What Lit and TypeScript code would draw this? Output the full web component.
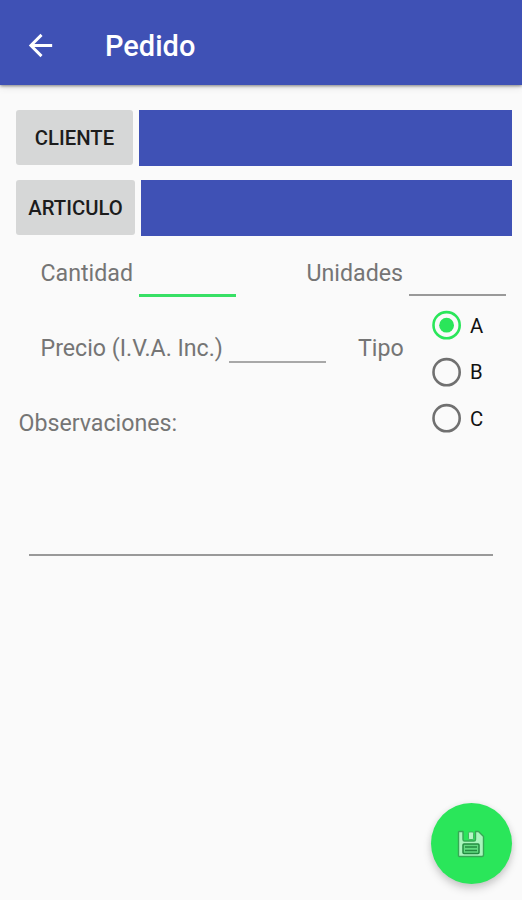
import { LitElement, html, css, svg } from "lit";
import { customElement, state } from "lit/decorators.js";

@customElement("app-root")
export class AppRoot extends LitElement {
  @state() private tipo = "A";

  static styles = css`
    :host {
      display: block;
      position: relative;
      height: 900px;
      overflow: hidden;
      background: #fafafa;
      color: #757575;
      font-family: Roboto, "Noto Sans", sans-serif;
      font-size: 23.2px;
      line-height: 28px;
    }
    * { box-sizing: border-box; }
    svg { display: block; }
    header {
      height: 85px;
      padding: 6px 0 0 23px;
      display: flex;
      align-items: center;
      background: #3f51b5;
      box-shadow: 0 1px 3px rgba(0, 0, 0, 0.45), 0 2px 8px rgba(0, 0, 0, 0.1);
    }
    h1 {
      margin: 1px 0 0 47px;
      color: #fff;
      font-size: 29px;
      line-height: 36px;
      font-weight: 500;
    }
    .pickers {
      padding: 25px 10px 0 16px;
      display: flex;
      flex-direction: column;
      gap: 14px;
    }
    .picker { display: flex; gap: 6px; height: 56px; }
    .btn {
      height: 55px;
      width: 117px;
      padding: 0;
      border: 0;
      border-radius: 3px;
      background: #d6d7d7;
      color: #1c1c1c;
      font: 500 20.3px/24px Roboto, sans-serif;
      text-align: center;
    }
    .btn.wide { width: 119px; }
    .value { flex: 1; background: #3f51b5; }
    .form { display: flex; padding-top: 23px; height: 173px; }
    .left { width: 326px; padding-left: 40px; }
    .right { width: 196px; }
    .row { display: flex; gap: 6px; height: 39px; }
    .unidades { margin-left: -20px; }
    .precio { margin-top: 36px; }
    .field { width: 97px; height: 37px; border-bottom: 2px solid #999; }
    .label { white-space: nowrap; }
    .row .label, .notes .label { text-indent: 0.5px; }
    .field.focus { height: 38px; border-bottom: 3px solid #37e065; }
    .precio .field { height: 29px; border-color: #a8a8a8; }
    .cantidad .label { width: 93px; }
    .precio .label { width: 183px; }
    .unidades .label { width: 97px; }
    .tipo { display: flex; padding-left: 32px; }
    .tipo > .label { width: 73.5px; margin-top: 36px; }
    .radios { display: flex; flex-direction: column; gap: 16.5px; margin-top: 12px; }
    .radio {
      display: flex;
      align-items: center;
      gap: 8.5px;
      height: 30px;
      color: #111;
      font-size: 20.3px;
    }
    .radio span { padding-top: 1px; }
    .notes { padding: 0 29px; }
    .notes .label { margin-left: -11px; }
    .area { height: 119px; border-bottom: 2px solid #999; }
    .fab {
      position: absolute;
      left: 431px;
      top: 803px;
      width: 81px;
      height: 81px;
      padding: 0 1px 0 0;
      border: 0;
      border-radius: 50%;
      background: #2ae65a;
      display: grid;
      place-items: center;
      box-shadow: 0 5px 8px rgba(0, 0, 0, 0.17), 0 1px 6px rgba(0, 0, 0, 0.08);
    }
  `;

  private radio(name: string) {
    const on = this.tipo === name;
    return html`<div class="radio" role="radio" aria-checked=${on} @click=${() => (this.tipo = name)}>
      <svg width="30" height="30" viewBox="0 0 30 30">
        <circle cx="14.6" cy="15.2" r="13.1" fill="none" stroke=${on ? "#2ae65a" : "#707070"} stroke-width="2.6" />
        ${on ? svg`<circle cx="14.6" cy="15.2" r="7.4" fill="#2ae65a" />` : ""}
      </svg>
      <span>${name}</span>
    </div>`;
  }

  render() {
    return html`
      <header>
        <svg width="35" height="35" viewBox="0 0 24 24" fill="#fff">
          <path d="M20 11H7.83l5.59-5.59L12 4l-8 8 8 8 1.41-1.41L7.83 13H20v-2z" />
        </svg>
        <h1>Pedido</h1>
      </header>
      <div class="pickers">
        <div class="picker"><button class="btn">CLIENTE</button><div class="value"></div></div>
        <div class="picker"><button class="btn wide">ARTICULO</button><div class="value"></div></div>
      </div>
      <div class="form">
        <div class="left">
          <div class="row cantidad"><span class="label">Cantidad</span><div class="field focus"></div></div>
          <div class="row precio"><span class="label">Precio (I.V.A. Inc.)</span><div class="field"></div></div>
        </div>
        <div class="right">
          <div class="row unidades"><span class="label">Unidades</span><div class="field"></div></div>
          <div class="tipo">
            <span class="label">Tipo</span>
            <div class="radios" role="radiogroup">${["A", "B", "C"].map((n) => this.radio(n))}</div>
          </div>
        </div>
      </div>
      <div class="notes">
        <div class="label">Observaciones:</div>
        <div class="area"></div>
      </div>
      <button class="fab" aria-label="Guardar">
        <svg width="28" height="28" viewBox="0 0 28 28">
          <path d="M2 1.5H6V9.5q0 1.5 1.5 1.5H17q1.5 0 1.5-1.5V1.5H21.5L26.5 6.5V25q0 1.5-1.5 1.5H2.5q-1 0-1-1V2q0-.5.5-.5z" fill="#a9f5bd" stroke="#37a855" stroke-width="1.4" stroke-linejoin="round" />
          <rect x="11.5" y="2" width="5" height="7.5" rx="1.2" fill="#b5f5c5" stroke="#37a855" stroke-width=".8" />
          <rect x="6" y="14" width="16" height="9.5" rx="1" fill="#62da80" stroke="#238b40" stroke-width="1.5" />
          <path d="M8 17h12M8 20.5h12" stroke="#238b40" stroke-width="1.5" />
        </svg>
      </button>
    `;
  }
}
